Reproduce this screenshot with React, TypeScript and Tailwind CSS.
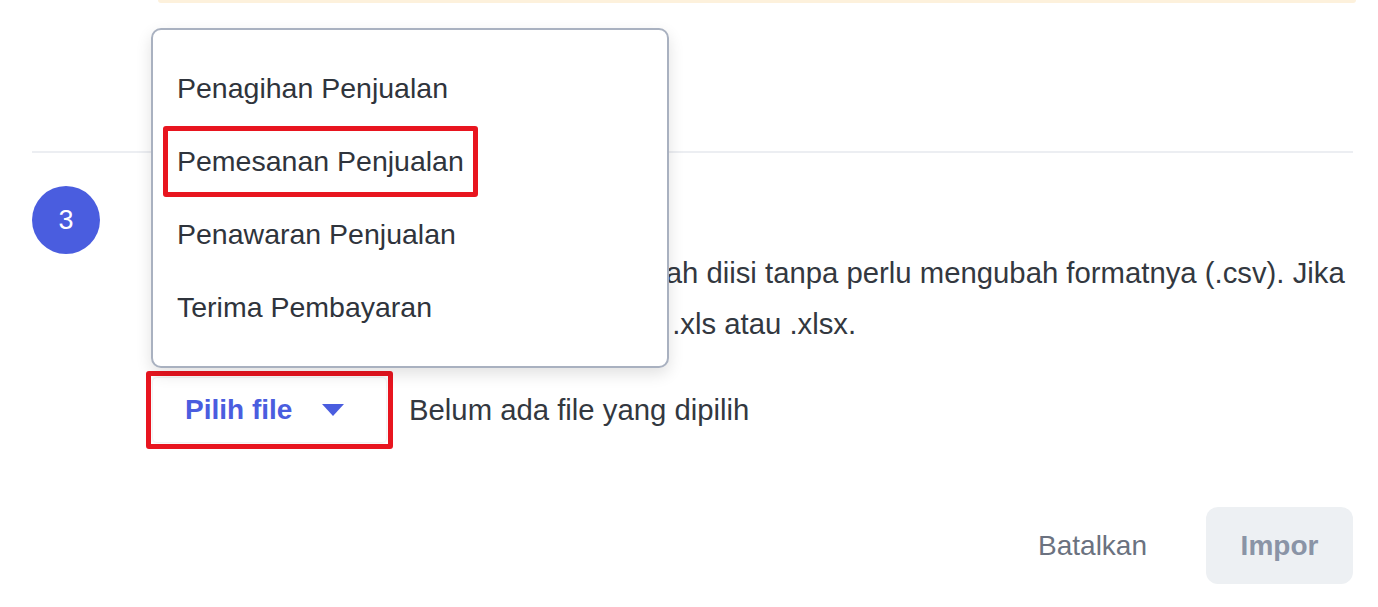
export default function App() {
  return (
    <div className="relative w-[1378px] h-[607px] overflow-hidden bg-white font-['Liberation_Sans',Arial,sans-serif] text-[29px] text-[#333840]">
      {/* bottom edge of the notice banner from step 2 */}
      <div className="ml-[158px] w-[1198px] h-[3px] bg-[#fdf1dc] rounded-b-md" />

      {/* step 2 body (covered by the menu) */}
      <div className="h-[148px] pl-[151px] pt-[30px]">
        <div className="w-[480px] h-[60px] rounded-[10px] border border-[#d6dbe3]" />
      </div>

      {/* divider */}
      <div className="ml-[32px] w-[1321px] h-[2px] bg-[#eceef2]" />

      {/* step 3 */}
      <div className="flex pl-[32px] pt-[33px]">
        <div className="flex h-[68px] w-[68px] shrink-0 items-center justify-center rounded-full bg-[#4a5ddf] text-[27px] text-white">
          3
        </div>
        <div className="ml-[51px] flex-1">
          <div className="h-[61px]" />
          <p className="text-[29.3px] leading-[51px] whitespace-nowrap text-[#333840]">
            Unggah file templat penjualan yang sudah diisi tanpa perlu mengubah formatnya (.csv). Jika
            <br />
            menggunakan Excel, ubah dulu dari file .xls atau .xlsx.
          </p>
          <div className="mt-[22px] flex items-center">
            <div className="rounded-[3px] border-[5px] border-[#e8151f] p-[2px] -ml-[5px]">
              <button className="flex h-[64px] w-[233px] items-center rounded-[4px] bg-white pl-[32px] text-[28px] font-bold text-[#4a5ddf] shadow-[0_0_3px_rgba(0,0,0,0.15)]">
                Pilih file
                <svg className="ml-[30px]" width="22" height="12" viewBox="0 0 22 12">
                  <path d="M0 0 H22 L11 12 Z" fill="#4a5ddf" />
                </svg>
              </button>
            </div>
            <span className="ml-[16px] text-[29.3px]">Belum ada file yang dipilih</span>
          </div>
        </div>
      </div>

      {/* footer actions */}
      <div className="mt-[58px] flex items-center justify-end pr-[25px] text-[28px]">
        <button className="mr-[59px] text-[#6b7280]">Batalkan</button>
        <button className="h-[77px] w-[147px] rounded-[12px] bg-[#edf0f3] font-bold text-[#8a94a6]">
          Impor
        </button>
      </div>

      {/* open dropdown menu */}
      <div className="absolute left-[151px] top-[28px] w-[518px] rounded-[10px] border-2 border-[#a9b1c0] bg-white py-[22px] text-[28.5px] shadow-[0_6px_16px_rgba(0,0,0,0.12)]">
        {["Penagihan Penjualan", "Pemesanan Penjualan", "Penawaran Penjualan", "Terima Pembayaran"].map((item, i) => (
          <div key={item} className="relative flex h-[73px] items-center pl-[24px] text-[#2f343c]">
            {item}
            {i === 1 && (
              <div className="absolute left-[10px] top-[1px] h-[71px] w-[315px] rounded-[3px] border-[5px] border-[#e8151f]" />
            )}
          </div>
        ))}
      </div>
    </div>
  );
}
